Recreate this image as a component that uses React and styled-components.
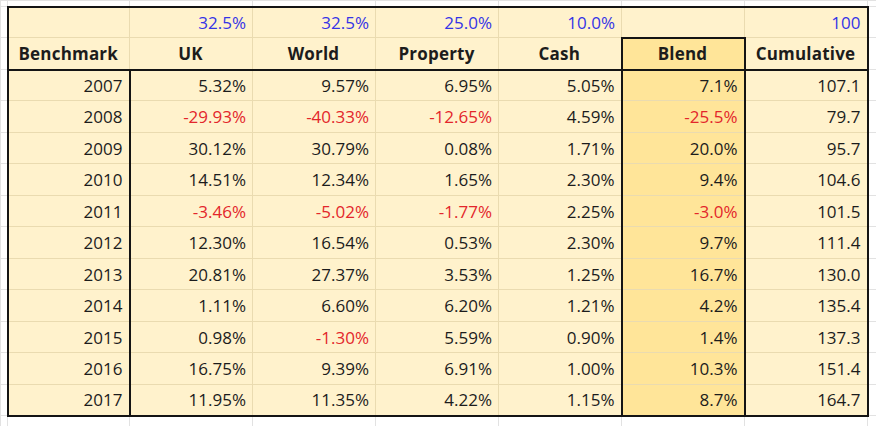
import React from "react";
import styled, { createGlobalStyle, css } from "styled-components";

const Global = createGlobalStyle`
  html, body { margin: 0; padding: 0; background: #ffffff; }
  body { font-family: "Open Sans", "DejaVu Sans", sans-serif; }
`;

const Sheet = styled.table`
  border-collapse: collapse;
  table-layout: fixed;
  width: 876px;
  font-family: "Open Sans", "DejaVu Sans", sans-serif;
  font-size: 17px;
  color: #1c1c1c;
`;

const Row = styled.tr`
  height: ${(p) => p.$h}px;
`;

const thick = "2px solid #141414";

const Cell = styled.td`
  padding: 0 6px 0 5px;
  overflow: hidden;
  white-space: nowrap;
  vertical-align: middle;
  line-height: 1;
  text-align: ${(p) => p.$align || "right"};
  font-weight: ${(p) => (p.$bold ? 700 : 400)};
  letter-spacing: ${(p) => (p.$bold ? "0.2px" : "0")};
  color: ${(p) =>
    p.$tone === "red" ? "#e3262b" : p.$tone === "blue" ? "#3434e6" : "#1c1c1c"};
  background: ${(p) =>
    p.$outside ? "#ffffff" : p.$blend ? "#ffe599" : "#fff2cc"};
  border: 1px solid ${(p) => (p.$outside ? "#e2e2e2" : "#eadbb0")};
  ${(p) => p.$top && css`border-top: ${thick};`}
  ${(p) => p.$bottom && css`border-bottom: ${thick};`}
  ${(p) => p.$left && css`border-left: ${thick};`}
  ${(p) => p.$right && css`border-right: ${thick};`}
`;

const weights = ["32.5%", "32.5%", "25.0%", "10.0%"];
const heads = ["UK", "World", "Property", "Cash"];

const data = [
  ["2007", "5.32%", "9.57%", "6.95%", "5.05%", "7.1%", "107.1"],
  ["2008", "-29.93%", "-40.33%", "-12.65%", "4.59%", "-25.5%", "79.7"],
  ["2009", "30.12%", "30.79%", "0.08%", "1.71%", "20.0%", "95.7"],
  ["2010", "14.51%", "12.34%", "1.65%", "2.30%", "9.4%", "104.6"],
  ["2011", "-3.46%", "-5.02%", "-1.77%", "2.25%", "-3.0%", "101.5"],
  ["2012", "12.30%", "16.54%", "0.53%", "2.30%", "9.7%", "111.4"],
  ["2013", "20.81%", "27.37%", "3.53%", "1.25%", "16.7%", "130.0"],
  ["2014", "1.11%", "6.60%", "6.20%", "1.21%", "4.2%", "135.4"],
  ["2015", "0.98%", "-1.30%", "5.59%", "0.90%", "1.4%", "137.3"],
  ["2016", "16.75%", "9.39%", "6.91%", "1.00%", "10.3%", "151.4"],
  ["2017", "11.95%", "11.35%", "4.22%", "1.15%", "8.7%", "164.7"],
];

const colWidths = [7, 122, 123, 123, 123, 123, 123, 123, 9];
const bodyHeights = [31, 32, 31, 32, 31, 32, 31, 32, 31, 32, 31];

const toneOf = (v) => (v.startsWith("-") ? "red" : undefined);

export default function App() {
  const last = data.length - 1;
  return (
    <>
      <Global />
      <Sheet>
        <colgroup>
          {colWidths.map((w, i) => (
            <col key={i} style={{ width: w }} />
          ))}
        </colgroup>
        <tbody>
          <Row $h={6}>
            {colWidths.map((_, i) => (
              <Cell key={i} $outside />
            ))}
          </Row>
          <Row $h={31}>
            <Cell $outside />
            <Cell $top $left />
            {weights.map((w, i) => (
              <Cell key={i} $top $tone="blue">
                {w}
              </Cell>
            ))}
            <Cell $top />
            <Cell $top $right $tone="blue">
              100
            </Cell>
            <Cell $outside />
          </Row>
          <Row $h={32}>
            <Cell $outside />
            <Cell $left $bottom $align="center" $bold>
              Benchmark
            </Cell>
            {heads.map((h) => (
              <Cell key={h} $bottom $align="center" $bold>
                {h}
              </Cell>
            ))}
            <Cell $top $left $right $bottom $blend $align="center" $bold>
              Blend
            </Cell>
            <Cell $right $bottom $align="center" $bold>
              Cumulative
            </Cell>
            <Cell $outside />
          </Row>
          {data.map((r, ri) => (
            <Row key={r[0]} $h={bodyHeights[ri]}>
              <Cell $outside />
              <Cell $left $right $bottom={ri === last}>
                {r[0]}
              </Cell>
              {r.slice(1, 5).map((v, ci) => (
                <Cell key={ci} $tone={toneOf(v)} $bottom={ri === last}>
                  {v}
                </Cell>
              ))}
              <Cell $blend $left $right $tone={toneOf(r[5])} $bottom={ri === last}>
                {r[5]}
              </Cell>
              <Cell $right $bottom={ri === last}>
                {r[6]}
              </Cell>
              <Cell $outside />
            </Row>
          ))}
          <Row $h={11}>
            {colWidths.map((_, i) => (
              <Cell key={i} $outside />
            ))}
          </Row>
        </tbody>
      </Sheet>
    </>
  );
}
